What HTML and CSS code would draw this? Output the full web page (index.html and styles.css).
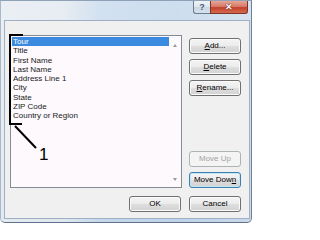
FILE: index.html
```html
<!DOCTYPE html>
<html>
<head>
<meta charset="utf-8">
<link rel="stylesheet" href="styles.css">
</head>
<body>
<div class="window">
  <div class="titlebar">
    <span class="cap help">?</span>
    <span class="cap close">&#x2715;</span>
  </div>
  <div class="client">
    <div class="main">
      <div class="listbox">
        <ul class="items">
          <li class="sel">Tour</li>
          <li>Title</li>
          <li>First Name</li>
          <li>Last Name</li>
          <li>Address Line 1</li>
          <li>City</li>
          <li>State</li>
          <li>ZIP Code</li>
          <li>Country or Region</li>
        </ul>
        <div class="scrollbar">
          <span class="arrow up"></span>
          <span class="arrow down"></span>
        </div>
      </div>
      <div class="side">
        <div class="group">
          <button class="btn"><u>A</u>dd...</button>
          <button class="btn"><u>D</u>elete</button>
          <button class="btn"><u>R</u>ename...</button>
        </div>
        <div class="group">
          <button class="btn disabled">Move Up</button>
          <button class="btn focus">Move Dow<u>n</u></button>
        </div>
      </div>
    </div>
    <div class="footer">
      <button class="btn">OK</button>
      <button class="btn">Cancel</button>
    </div>
  </div>
  <svg class="callout" width="252" height="223" viewBox="0 0 252 223">
    <polyline points="23,35 10,35 10,124 22,124" fill="none" stroke="#000" stroke-width="2"/>
    <line x1="15" y1="126" x2="36" y2="148" stroke="#000" stroke-width="2"/>
    <text x="39" y="160" class="num">1</text>
  </svg>
</div>
</body>
</html>
```

FILE: styles.css
```css
* { box-sizing: border-box; }
html, body { margin: 0; padding: 0; }
body {
  width: 252px;
  height: 223px;
  overflow: hidden;
  font-family: "Liberation Sans", Arial, sans-serif;
  font-size: 8px;
  color: #1a1a1a;
}
.window {
  position: relative;
  width: 252px;
  height: 223px;
  background:
    linear-gradient(180deg, rgba(255,255,255,0.25) 0%, rgba(255,255,255,0) 100%),
    linear-gradient(90deg, #e4eaf1 0%, #dfe7ef 25%, #c4d7ec 40%, #bed3ea 70%, #c9d9ea 100%);
  border-top: 1px solid #8fa1b6;
  border-left: 1px solid #a9b8c9;
  border-right: 1px solid #6f8198;
  border-bottom: 1px solid #5f7189;
  border-radius: 0 0 5px 5px;
  display: flex;
  flex-direction: column;
}
.titlebar {
  height: 20px;
  display: flex;
  justify-content: flex-end;
  align-items: flex-start;
  padding-right: 3px;
}
.cap {
  height: 13px;
  display: flex;
  align-items: center;
  justify-content: center;
  border: 1px solid #6a7c90;
  border-top: none;
}
.help {
  width: 17px;
  border-radius: 0 0 0 3px;
  border-right: none;
  background: linear-gradient(180deg, #eef3f8 0%, #dde6ef 50%, #c9d6e3 51%, #d6e1ec 100%);
  color: #4b5b6c;
  font-size: 9px;
  font-weight: bold;
}
.close {
  width: 38px;
  border-radius: 0 0 3px 0;
  border-color: #7c3528;
  background: linear-gradient(180deg, #e8a597 0%, #d77c6a 45%, #c4412c 55%, #d46a50 100%);
  color: #fff;
  font-size: 9px;
  font-weight: bold;
  text-shadow: 0 0 1px #5a1a10, 0 0 1px #5a1a10;
}
.client {
  margin: 0 2px 4px 4px;
  flex: 1;
  background: #f0f0f0;
  box-shadow: 0 0 0 1px #9fb0c4;
  padding: 14px 8px 6px 5px;
  display: flex;
  flex-direction: column;
}
.main {
  height: 153px;
  display: flex;
  gap: 7px;
}
.listbox {
  width: 172px;
  height: 153px;
  border: 1px solid #868b93;
  background: #fdf9fd;
  display: flex;
}
.items {
  list-style: none;
  margin: 0;
  padding: 1px 0 0 1px;
  flex: 1;
}
.items li {
  height: 9.25px;
  line-height: 9.25px;
  padding-left: 1px;
  white-space: nowrap;
}
.items li.sel {
  background: #3a8ae0;
  color: #fff;
}
.scrollbar {
  width: 12px;
  display: flex;
  flex-direction: column;
  justify-content: space-between;
  align-items: center;
  padding: 8px 0 6px;
}
.arrow {
  width: 0;
  height: 0;
  border-left: 2.5px solid transparent;
  border-right: 2.5px solid transparent;
}
.arrow.up { border-bottom: 3px solid #9a9a9a; }
.arrow.down { border-top: 3px solid #9a9a9a; }
.side {
  width: 52px;
  display: flex;
  flex-direction: column;
  justify-content: space-between;
  padding-top: 3px;
}
.group {
  display: flex;
  flex-direction: column;
  gap: 5px;
}
.btn {
  width: 52px;
  height: 16px;
  padding: 0;
  margin: 0;
  border: 1px solid #707070;
  border-radius: 3px;
  background: linear-gradient(180deg, #f4f4f4 0%, #ececec 48%, #dedede 52%, #d2d2d2 100%);
  box-shadow: inset 0 0 0 1px #fbfbfb;
  font-family: "Liberation Sans", Arial, sans-serif;
  font-size: 8px;
  color: #000;
  line-height: 14px;
  text-align: center;
}
.btn u { text-decoration: underline; }
.btn.disabled {
  border-color: #adb2b5;
  background: #f4f4f4;
  box-shadow: none;
  color: #a3a3a3;
}
.btn.focus {
  border-color: #3c7fb1;
  box-shadow: inset 0 0 0 1px #c4e5f6;
}
.footer {
  margin-top: 8px;
  height: 16px;
  display: flex;
  justify-content: flex-end;
  gap: 8px;
}
.callout {
  position: absolute;
  left: -1px;
  top: -1px;
  pointer-events: none;
}
.num {
  font-family: "Liberation Sans", Arial, sans-serif;
  font-size: 17px;
  fill: #000;
}
```
